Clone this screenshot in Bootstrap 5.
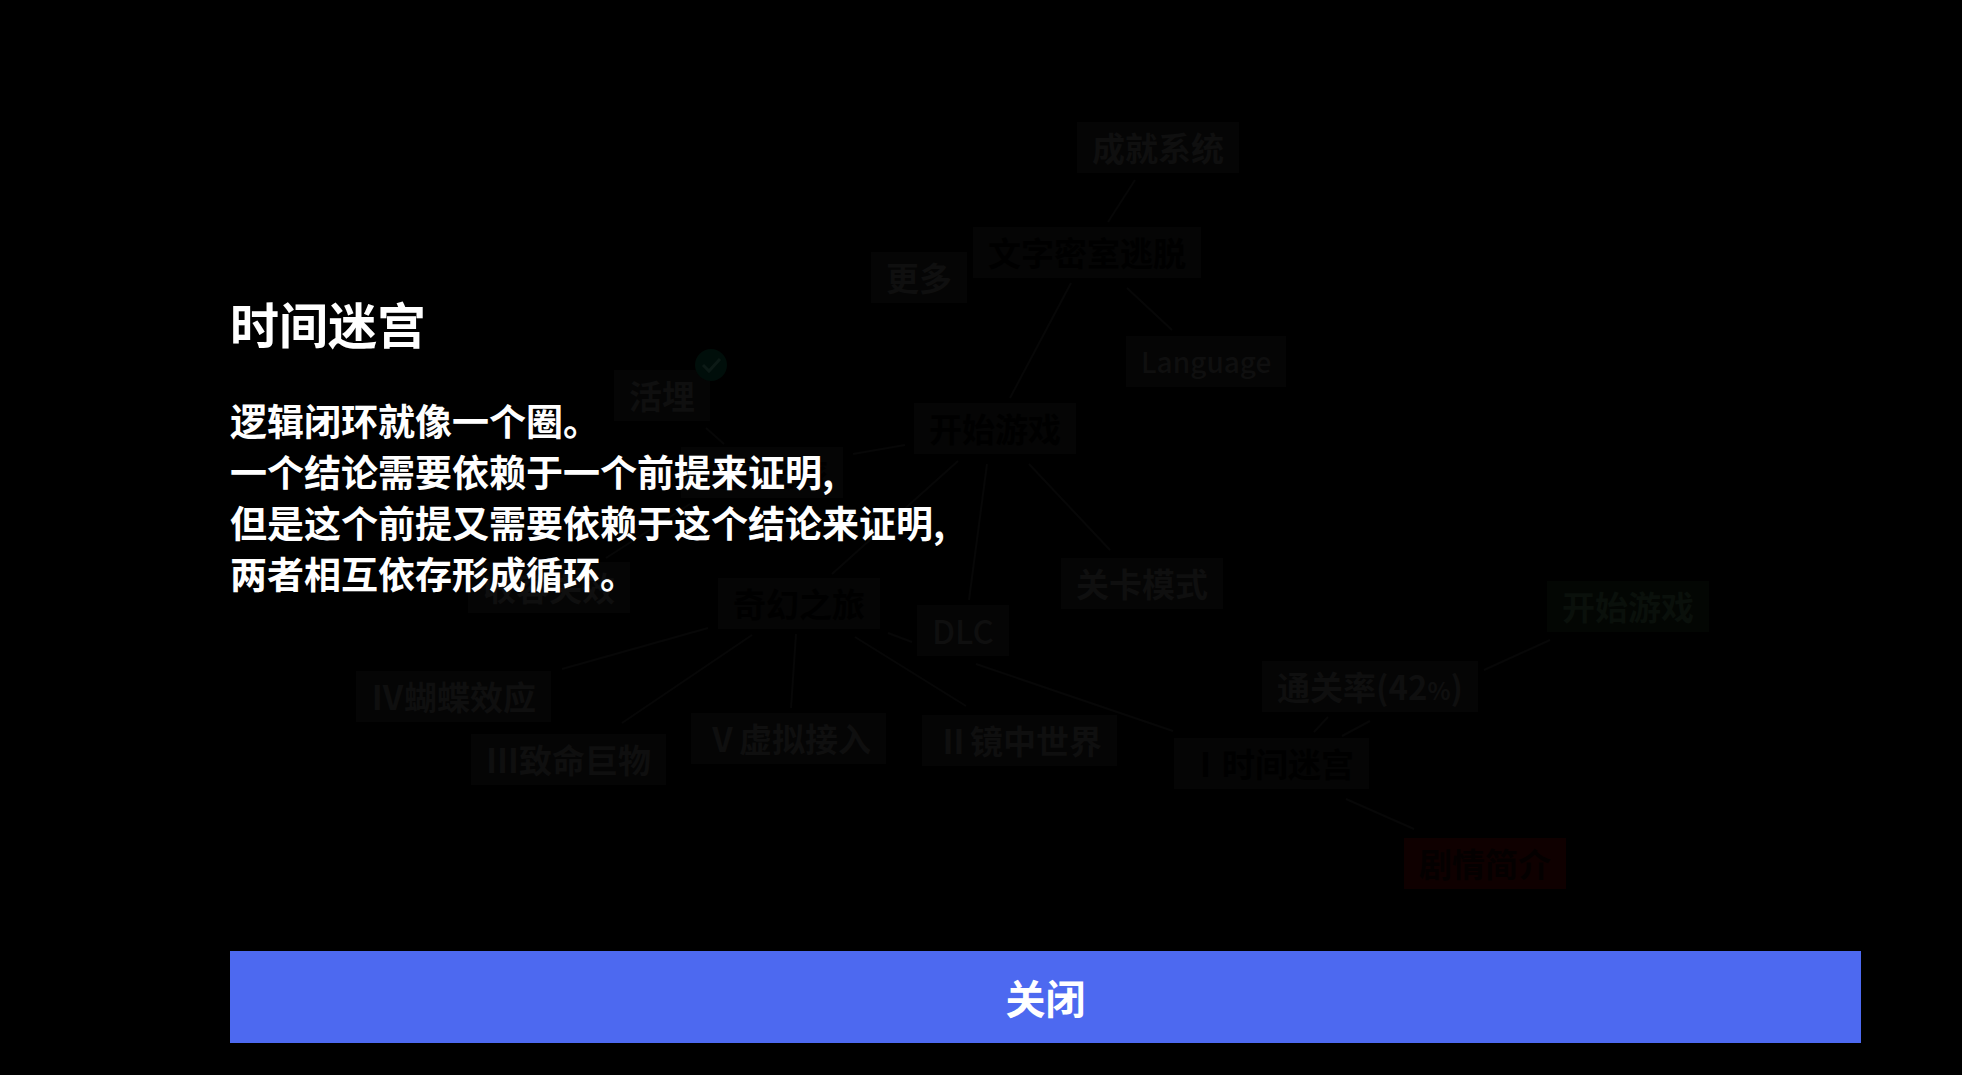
<!DOCTYPE html>
<html lang="zh-CN">
<head>
<meta charset="utf-8">
<meta name="viewport" content="width=device-width, initial-scale=1">
<title>时间迷宫</title>
<link rel="stylesheet" href="https://cdn.jsdelivr.net/npm/bootstrap@5.3.0/dist/css/bootstrap.min.css">
<style>
body { background: #000; color: #fff; font-family: "Noto Sans CJK SC", sans-serif; }
.map-canvas { inset: 0; }
.map-lines { inset: 0; }
.map-lines line { stroke: #070707; stroke-width: 2; }
.map-node {
  position: absolute;
  left: calc(var(--x) / 1962 * 100%);
  top: calc(var(--y) / 1075 * 100%);
  padding: 0 15px;
  font-size: 33px;
  line-height: 51px;
  font-weight: 700;
  color: #0f0f0f;
  background: #050505;
  text-decoration: none;
  white-space: nowrap;
}
.map-node.visited { color: #000; }
.map-node.go { background: #030603; color: #0a100b; }
.map-node.intro { background: #0f0000; color: #040000; }
.map-node .percent { font-size: 24px; line-height: 1; }
.n-achieve { --x: 1077; --y: 122; }
.n-root { --x: 973; --y: 227; }
.n-more { --x: 871; --y: 252; }
.map-node.n-lang { --x: 1126; --y: 336; font-size: 28px; font-weight: 500; }
.n-buried { --x: 614; --y: 370; }
.n-start { --x: 914; --y: 403; }
.n-real { --x: 681; --y: 447; }
.n-contain { --x: 468; --y: 562; }
.n-fantasy { --x: 718; --y: 578; }
.map-node.n-dlc { --x: 917; --y: 605; font-weight: 500; }
.n-level { --x: 1061; --y: 558; }
.n-four { --x: 356; --y: 671; }
.n-three { --x: 471; --y: 734; }
.n-five { --x: 691; --y: 713; }
.n-two { --x: 922; --y: 715; }
.n-one { --x: 1174; --y: 738; }
.n-rate { --x: 1262; --y: 661; }
.n-go { --x: 1547; --y: 581; }
.n-intro { --x: 1404; --y: 838; }
.done-mark { top: -22px; right: -18px; width: 34px; height: 34px; }
.story { position: relative; min-height: 100vh; padding: 293px 101px 32px 230px; }
.story-title { font-size: 49px; line-height: 60px; font-weight: 700; margin-bottom: 42px; }
.story-text { font-size: 37px; line-height: 51px; font-weight: 700; }
.close-btn {
  height: 92px; border-radius: 0; color: #fff; background: #4d69f0; border: 0;
  font-size: 40px; line-height: 60px; font-weight: 700;
}
.close-btn:hover { color: #fff; background: #5c76f4; }
</style>
<script src="https://cdn.jsdelivr.net/npm/bootstrap@5.3.0/dist/js/bootstrap.bundle.min.js"></script>
</head>
<body>
<nav class="map-canvas position-absolute overflow-hidden" aria-label="地图">
  <svg class="map-lines position-absolute w-100 h-100" viewBox="0 0 1962 1075" preserveAspectRatio="none" aria-hidden="true">
    <line x1="1135" y1="180" x2="1108" y2="222"/>
    <line x1="1071" y1="283" x2="1010" y2="398"/>
    <line x1="1127" y1="288" x2="1172" y2="330"/>
    <line x1="706" y1="428" x2="724" y2="444"/>
    <line x1="905" y1="445" x2="853" y2="454"/>
    <line x1="958" y1="461" x2="832" y2="574"/>
    <line x1="987" y1="464" x2="969" y2="600"/>
    <line x1="1029" y1="464" x2="1110" y2="550"/>
    <line x1="690" y1="504" x2="606" y2="558"/>
    <line x1="708" y1="628" x2="562" y2="669"/>
    <line x1="752" y1="635" x2="622" y2="723"/>
    <line x1="796" y1="634" x2="791" y2="708"/>
    <line x1="855" y1="637" x2="966" y2="706"/>
    <line x1="888" y1="633" x2="912" y2="642"/>
    <line x1="976" y1="664" x2="1173" y2="731"/>
    <line x1="1328" y1="717" x2="1314" y2="732"/>
    <line x1="1370" y1="721" x2="1342" y2="736"/>
    <line x1="1484" y1="670" x2="1550" y2="640"/>
    <line x1="1346" y1="799" x2="1414" y2="829"/>
  </svg>
  <a href="#" class="map-node n-achieve">成就系统</a>
  <a href="#" class="map-node n-root visited">文字密室逃脱</a>
  <a href="#" class="map-node n-more">更多</a>
  <a href="#" class="map-node n-lang">Language</a>
  <a href="#" class="map-node n-buried">活埋
    <svg class="done-mark position-absolute" viewBox="0 0 34 34" aria-hidden="true"><circle cx="17" cy="17" r="16" fill="#000e0a"/><path d="M9 17l6 6 11-12" fill="none" stroke="#0c1a16" stroke-width="3"/></svg>
  </a>
  <a href="#" class="map-node n-start visited">开始游戏</a>
  <a href="#" class="map-node n-real visited">现实之旅</a>
  <a href="#" class="map-node n-contain">收容失效</a>
  <a href="#" class="map-node n-fantasy visited">奇幻之旅</a>
  <a href="#" class="map-node n-dlc">DLC</a>
  <a href="#" class="map-node n-level">关卡模式</a>
  <a href="#" class="map-node n-four">Ⅳ蝴蝶效应</a>
  <a href="#" class="map-node n-three">Ⅲ致命巨物</a>
  <a href="#" class="map-node n-five">Ⅴ虚拟接入</a>
  <a href="#" class="map-node n-two">Ⅱ镜中世界</a>
  <a href="#" class="map-node n-one visited">Ⅰ时间迷宫</a>
  <a href="#" class="map-node n-rate">通关率(42<span class="percent">%</span>)</a>
  <a href="#" class="map-node n-go go">开始游戏</a>
  <a href="#" class="map-node n-intro intro">剧情简介</a>
</nav>
<main class="story d-flex flex-column">
  <h1 class="story-title">时间迷宫</h1>
  <p class="story-text mb-auto">逻辑闭环就像一个圈。<br>一个结论需要依赖于一个前提来证明,<br>但是这个前提又需要依赖于这个结论来证明,<br>两者相互依存形成循环。</p>
  <button type="button" class="close-btn btn w-100">关闭</button>
</main>
</body>
</html>
